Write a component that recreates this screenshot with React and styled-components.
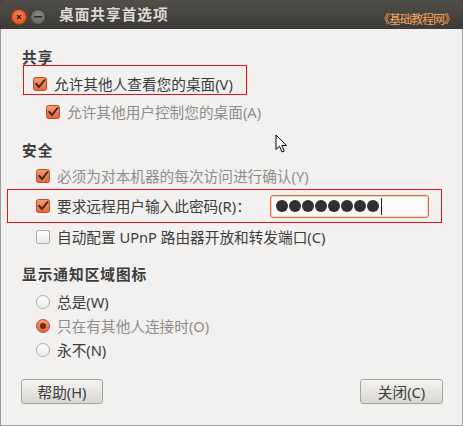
import styled, { createGlobalStyle } from 'styled-components';

const GlobalStyle = createGlobalStyle`
    html, body {
        margin: 0;
        padding: 0;
        background: #5a3450;
    }
    body {
        font-family: 'Noto Sans', 'Noto Sans CJK SC', sans-serif;
        font-size: 14.67px;
        color: #3c3c3c;
    }
`;

const Window = styled.div`
    position: relative;
    width: 463px;
    height: 426px;
    display: flex;
    flex-direction: column;
    border-radius: 5px 5px 0 0;
    overflow: hidden;
`;

const TitleBar = styled.div`
    height: 29px;
    flex-shrink: 0;
    display: flex;
    align-items: flex-start;
    padding-left: 11px;
    box-sizing: border-box;
    background: linear-gradient(to bottom, #4f4e49 0%, #46453f 45%, #3c3b37 100%);
`;

const Controls = styled.div`
    display: flex;
    gap: 3px;
    margin-top: 9px;
`;

const WinButton = styled.span`
    width: 16px;
    height: 16px;
    border-radius: 50%;
    box-sizing: border-box;
    display: flex;
    align-items: center;
    justify-content: center;
    border: 1px solid ${(p) => (p.$close ? '#a83a12' : '#3a3935')};
    background: ${(p) =>
        p.$close
            ? 'radial-gradient(circle at 50% 35%, #f88a5a 0%, #e8602c 55%, #cf4a18 100%)'
            : 'radial-gradient(circle at 50% 35%, #8b8984 0%, #6f6d68 60%, #5d5b57 100%)'};
`;

const Title = styled.span`
    margin-left: 13px;
    margin-top: 5px;
    font-weight: 700;
    letter-spacing: 1px;
    line-height: 18px;
    color: #dfdbd2;
`;

const Watermark = styled.span`
    margin-left: auto;
    margin-right: 8px;
    margin-top: 12px;
    font-family: 'Noto Sans CJK SC', sans-serif;
    font-size: 12px;
    letter-spacing: -1px;
    line-height: 14px;
    color: #f6a25e;
`;

const Body = styled.div`
    flex: 1;
    display: flex;
    flex-direction: column;
    background: #f2f1f0;
    border: 1px solid #9d9c9a;
    border-top: none;
`;

const Heading = styled.div`
    margin-top: ${(p) => p.$mt}px;
    margin-left: 21px;
    height: 20px;
    line-height: 20px;
    font-weight: 700;
    letter-spacing: 1px;
    color: #3c3c3c;
`;

const Row = styled.div`
    display: flex;
    align-items: center;
    gap: 7px;
    height: ${(p) => p.$h || 24}px;
    margin-top: ${(p) => p.$mt || 0}px;
    margin-left: ${(p) => p.$ml || 0}px;
    padding-left: ${(p) => p.$pl || 0}px;
    padding-right: ${(p) => p.$pr || 0}px;
    color: ${(p) => (p.$disabled ? '#8e8d8b' : '#3c3c3c')};
    line-height: 20px;
    white-space: nowrap;
`;

const Highlight = styled.div`
    box-sizing: border-box;
    border: 1px solid #e31616;
    margin-top: ${(p) => p.$mt}px;
    margin-left: ${(p) => p.$ml}px;
    width: ${(p) => p.$w}px;
    height: ${(p) => p.$h}px;
    padding-top: ${(p) => p.$pt || 0}px;
`;

const PasswordBox = styled.div`
    margin-left: auto;
    width: 159px;
    height: 23px;
    box-sizing: border-box;
    border: 1px solid #dc6a3d;
    border-radius: 3px;
    background: #fbfbfa;
    box-shadow: inset 0 0 0 1px #f6d2bf;
    display: flex;
    align-items: center;
    gap: 1px;
    padding-left: 5px;
`;

const Dot = styled.span`
    width: 12px;
    height: 12px;
    border-radius: 50%;
    background: #2f2f2f;
`;

const Caret = styled.span`
    width: 1px;
    height: 17px;
    margin-left: 1px;
    background: #222;
`;

const ButtonBar = styled.div`
    display: flex;
    justify-content: space-between;
    margin-top: 17px;
    padding: 0 19px 0 20px;
`;

const Button = styled.button`
    width: ${(p) => p.$w}px;
    height: 25px;
    padding: 0;
    box-sizing: border-box;
    border: 1px solid #a4a29d;
    border-radius: 3px;
    background: linear-gradient(to bottom, #f4f3f1 0%, #e6e4e1 55%, #d9d7d3 100%);
    box-shadow: inset 0 1px 0 #fbfbfa;
    font-family: inherit;
    font-size: 14.67px;
    color: #3c3c3c;
    line-height: 20px;
`;

const Pointer = styled.svg`
    position: absolute;
    left: 275px;
    top: 134px;
`;

const Checkbox = ({ checked }) => (
    <svg width='14' height='14' viewBox='0 0 14 14' style={{ flexShrink: 0 }}>
        <defs>
            <linearGradient id='cbOn' x1='0' y1='0' x2='0' y2='1'>
                <stop offset='0' stopColor='#f79a70' />
                <stop offset='1' stopColor='#e3653a' />
            </linearGradient>
            <linearGradient id='cbOff' x1='0' y1='0' x2='0' y2='1'>
                <stop offset='0' stopColor='#ffffff' />
                <stop offset='1' stopColor='#ecebe9' />
            </linearGradient>
        </defs>
        <rect
            x='0.5'
            y='0.5'
            width='13'
            height='13'
            rx='2'
            fill={checked ? 'url(#cbOn)' : 'url(#cbOff)'}
            stroke={checked ? '#b8502a' : '#a9a7a3'}
        />
        {checked && (
            <path
                d='M3.2 6.8 L6 10 L11.6 3'
                fill='none'
                stroke='#3b2a24'
                strokeWidth='2'
                strokeLinecap='round'
                strokeLinejoin='round'
            />
        )}
    </svg>
);

const Radio = ({ checked }) => (
    <svg width='14' height='14' viewBox='0 0 14 14' style={{ flexShrink: 0 }}>
        <defs>
            <linearGradient id='rdOn' x1='0' y1='0' x2='0' y2='1'>
                <stop offset='0' stopColor='#f79a70' />
                <stop offset='1' stopColor='#e3653a' />
            </linearGradient>
            <linearGradient id='rdOff' x1='0' y1='0' x2='0' y2='1'>
                <stop offset='0' stopColor='#ffffff' />
                <stop offset='1' stopColor='#ecebe9' />
            </linearGradient>
        </defs>
        <circle
            cx='7'
            cy='7'
            r='6.5'
            fill={checked ? 'url(#rdOn)' : 'url(#rdOff)'}
            stroke={checked ? '#b8502a' : '#b0aeaa'}
        />
        {checked && <circle cx='7' cy='7' r='3' fill='#6e2c16' />}
    </svg>
);

const radios = [
    { label: '总是(W)', checked: false, disabled: false },
    { label: '只在有其他人连接时(O)', checked: true, disabled: true },
    { label: '永不(N)', checked: false, disabled: false },
];

const App = () => {
    return (
        <>
            <GlobalStyle />
            <Window>
                <TitleBar>
                    <Controls>
                        <WinButton $close>
                            <svg width='6' height='6' viewBox='0 0 6 6'>
                                <path d='M1 1 L5 5 M5 1 L1 5' stroke='#3a1708' strokeWidth='1.3' />
                            </svg>
                        </WinButton>
                        <WinButton>
                            <svg width='8' height='2' viewBox='0 0 8 2'>
                                <rect width='8' height='1.6' fill='#2e2d2a' />
                            </svg>
                        </WinButton>
                    </Controls>
                    <Title>桌面共享首选项</Title>
                    <Watermark>《基础教程网》</Watermark>
                </TitleBar>
                <Body>
                    <Heading $mt={18}>共享</Heading>
                    <Highlight $mt={-2} $ml={22} $w={224} $h={30} $pt={8}>
                        <Row $h={20} $pl={9}>
                            <Checkbox checked />
                            允许其他人查看您的桌面(V)
                        </Row>
                    </Highlight>
                    <Row $mt={5} $ml={45} $disabled>
                        <Checkbox checked />
                        允许其他用户控制您的桌面(A)
                    </Row>

                    <Heading $mt={16}>安全</Heading>
                    <Row $mt={4} $ml={35} $disabled>
                        <Checkbox checked />
                        必须为对本机器的每次访问进行确认(Y)
                    </Row>
                    <Highlight $mt={1} $ml={6} $w={435} $h={34}>
                        <Row $h={32} $pl={28} $pr={12}>
                            <Checkbox checked />
                            要求远程用户输入此密码(R)：
                            <PasswordBox>
                                {Array.from({ length: 8 }).map((_, i) => (
                                    <Dot key={i} />
                                ))}
                                <Caret />
                            </PasswordBox>
                        </Row>
                    </Highlight>
                    <Row $mt={2} $ml={35}>
                        <Checkbox />
                        自动配置 UPnP 路由器开放和转发端口(C)
                    </Row>

                    <Heading $mt={15}>显示通知区域图标</Heading>
                    {radios.map((item, i) => (
                        <Row key={item.label} $mt={i === 0 ? 6 : 0} $ml={35} $disabled={item.disabled}>
                            <Radio checked={item.checked} />
                            {item.label}
                        </Row>
                    ))}

                    <ButtonBar>
                        <Button $w={82}>帮助(H)</Button>
                        <Button $w={83}>关闭(C)</Button>
                    </ButtonBar>
                </Body>
                <Pointer width='13' height='20' viewBox='0 0 13 20'>
                    <path
                        d='M1 1 L1 15.5 L4.5 12.2 L7 18 L9.2 17 L6.8 11.4 L11.5 11.4 Z'
                        fill='#ffffff'
                        stroke='#000000'
                        strokeWidth='1'
                        strokeLinejoin='miter'
                    />
                </Pointer>
            </Window>
        </>
    );
};

export default App;
